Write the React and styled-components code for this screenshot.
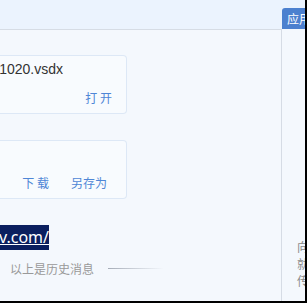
import React from "react";
import styled, { createGlobalStyle } from "styled-components";

const GlobalStyle = createGlobalStyle`
  html, body {
    margin: 0;
    padding: 0;
    background: #000;
  }
  body {
    font-family: "Noto Sans", "Noto Sans CJK SC", sans-serif;
  }
`;

function FileCard({ name, actions, pr }) {
  return (
    <Card>
      <NameRow>
        <FileName>{name}</FileName>
      </NameRow>
      <Actions $pr={pr}>
        {actions.map((a) => (
          <Action key={a}>{a}</Action>
        ))}
      </Actions>
    </Card>
  );
}

function App() {
  return (
    <>
      <GlobalStyle />
      <Window>
        <Main>
          <TopBar />
          <Messages>
            <FileCard name="流程设计-20231020.vsdx" actions={["打 开"]} pr={14} />
            <FileCard name="" actions={["下 载", "另存为"]} pr={19} />
            <LinkRow>
              <LinkText>https://www.xxx.dev.com/</LinkText>
            </LinkRow>
            <History>
              <HistoryText>以上是历史消息</HistoryText>
              <HistoryLine />
            </History>
          </Messages>
        </Main>
        <Side>
          <SideHead>
            <Tab>应用</Tab>
          </SideHead>
          <SideBody>
            <SideLine>向群成员发送</SideLine>
            <SideLine>就可以查看</SideLine>
            <SideLine>传文件</SideLine>
          </SideBody>
        </Side>
      </Window>
    </>
  );
}

export default App;

const Window = styled.div`
  width: 305px;
  height: 301px;
  display: flex;
  overflow: hidden;
  background: #f4f8fd;
`;

const Main = styled.div`
  width: 281px;
  display: flex;
  flex-direction: column;
  overflow: hidden;
`;

const TopBar = styled.div`
  height: 29px;
  flex-shrink: 0;
  background: #ebf3fe;
  border-bottom: 1px solid #d6dce5;
`;

const Messages = styled.div`
  flex: 1;
  display: flex;
  flex-direction: column;
  padding-top: 25px;
`;

const Card = styled.div`
  width: 126px;
  height: 57px;
  margin-bottom: 26px;
  box-sizing: content-box;
  border: 1px solid #dde8f6;
  border-left: none;
  border-radius: 0 4px 4px 0;
  background: #f8fbfe;
  display: flex;
  flex-direction: column;
`;

const NameRow = styled.div`
  width: 63px;
  height: 20px;
  margin-top: 3px;
  display: flex;
  justify-content: flex-end;
  overflow: hidden;
`;

const FileName = styled.span`
  white-space: nowrap;
  font-family: "Liberation Sans", "Noto Sans CJK SC", sans-serif;
  font-size: 14px;
  line-height: 20px;
  color: #333;
`;

const Actions = styled.div`
  margin-top: 9px;
  height: 20px;
  display: flex;
  justify-content: flex-end;
  gap: 22px;
  padding-right: ${(p) => p.$pr}px;
`;

const Action = styled.span`
  font-family: "Noto Sans CJK SC", sans-serif;
  font-size: 12px;
  line-height: 20px;
  color: #4f86d6;
  white-space: pre;
  cursor: pointer;
`;

const LinkRow = styled.div`
  width: 49px;
  height: 25px;
  display: flex;
  justify-content: flex-end;
  overflow: hidden;
`;

const LinkText = styled.span`
  white-space: nowrap;
  background: #0b1f5f;
  color: #fff;
  text-decoration: underline;
  font-family: "Noto Sans", sans-serif;
  font-size: 16px;
  line-height: 25px;
`;

const History = styled.div`
  display: flex;
  align-items: center;
  margin-top: 9px;
  padding-left: 10px;
  gap: 14px;
  height: 18px;
`;

const HistoryText = styled.span`
  font-family: "Noto Sans CJK SC", sans-serif;
  font-size: 12px;
  color: #999;
  white-space: nowrap;
`;

const HistoryLine = styled.div`
  width: 56px;
  height: 1px;
  background: linear-gradient(to right, #a6adb8, rgba(166, 173, 184, 0));
`;

const Side = styled.div`
  flex: 1;
  display: flex;
  flex-direction: column;
  overflow: hidden;
`;

const SideHead = styled.div`
  height: 29px;
  flex-shrink: 0;
  background: #ebf3fe;
  padding: 8px 0 0 1px;
  box-sizing: border-box;
  display: flex;
`;

const Tab = styled.div`
  flex: 1;
  background: #4c80cf;
  border-radius: 3px 0 0 0;
  color: #fff;
  font-family: "Noto Sans CJK SC", sans-serif;
  font-size: 12px;
  line-height: 21px;
  padding-left: 5px;
  white-space: nowrap;
  overflow: hidden;
`;

const SideBody = styled.div`
  flex: 1;
  border-left: 1px solid #d6dce5;
  display: flex;
  flex-direction: column;
  justify-content: flex-end;
  padding: 0 0 12px 15px;
  overflow: hidden;
`;

const SideLine = styled.div`
  font-family: "Noto Sans CJK SC", sans-serif;
  font-size: 12px;
  line-height: 17px;
  color: #8a8a8a;
  white-space: nowrap;
`;
